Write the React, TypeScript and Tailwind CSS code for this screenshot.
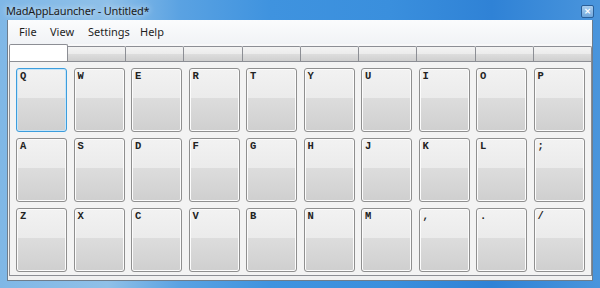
import React from "react";

const rows = [
  ["Q", "W", "E", "R", "T", "Y", "U", "I", "O", "P"],
  ["A", "S", "D", "F", "G", "H", "J", "K", "L", ";"],
  ["Z", "X", "C", "V", "B", "N", "M", ",", ".", "/"],
];

export default function App() {
  return (
    <div className="w-[600px] h-[288px] overflow-hidden bg-[linear-gradient(90deg,#7fb7e6_0%,#8fc0e8_18%,#5aa2e2_30%,#3f93df_45%,#3a8fdd_65%,#2f82d6_82%,#4a95dc_100%)] flex flex-col">
      {/* title bar */}
      <div className="h-[20px] flex items-center justify-between pl-[6px] pr-[6px]">
        <span
          className="text-[11px] tracking-[-0.2px] leading-none text-[#1b1b1b] pt-[1px]"
          style={{ fontFamily: '"Noto Sans", sans-serif', textShadow: "0 0 6px rgba(255,255,255,0.9)" }}
        >
          MadAppLauncher - Untitled*
        </span>
        <div className="w-[13px] h-[13px] mt-[3px] rounded-[2px] border border-[#2a5f98] bg-[linear-gradient(#a9cdee,#6fa7dc)] flex items-center justify-center">
          <span className="text-[9px] leading-none text-white font-bold" style={{ fontFamily: '"DejaVu Sans", sans-serif' }}>
            ×
          </span>
        </div>
      </div>
      {/* client */}
      <div className="mx-[7px] mb-[7px] flex-1 flex flex-col bg-[#f0f0f0] border border-[#6e7d8c] border-t-0">
        {/* menu bar */}
        <div
          className="h-[24px] flex items-center bg-[linear-gradient(#fbfcfd,#f1f3f6)] text-[11px] text-[#1e1e1e] pl-[11px] pt-[1px]"
          style={{ fontFamily: '"Noto Sans", sans-serif' }}
        >
          <span className="w-[31px]">File</span>
          <span className="w-[38px]">View</span>
          <span className="w-[52px]">Settings</span>
          <span>Help</span>
        </div>
        {/* tabs */}
        <div className="h-[17px] flex items-end pl-[1px] bg-[#f8f8f9]">
          <div className="w-[59px] h-[17px] bg-white border border-[#8c8e94] border-b-0 rounded-t-[2px]" />
          {Array.from({ length: 9 }).map((_, i) => (
            <div
              key={i}
              className="w-[58.3px] h-[15px] bg-[linear-gradient(#f3f3f3_0%,#ebebeb_50%,#dddddd_51%,#cfcfcf_100%)] border border-[#8c8e94] border-l-0 border-b-0 rounded-tr-[2px]"
            />
          ))}
        </div>
        {/* tab page */}
        <div className="ml-[1px] w-[583px] h-[215px] bg-[#f3f3f3] border border-[#8c8e94] pl-[6px] pt-[6px]">
          <div className="grid grid-cols-[repeat(10,51px)] auto-rows-[64px] gap-x-[6.5px] gap-y-[6px]">
            {rows.flat().map((k, i) => (
              <div
                key={k}
                className={
                  "rounded-[3px] border bg-[linear-gradient(#f2f2f2_0%,#ebebeb_46%,#dddddd_46%,#cfcfcf_100%)] pl-[3px] pt-[2px] " +
                  (i === 0
                    ? "border-[#3c9ddd] shadow-[inset_0_0_0_1px_#c7e5f8]"
                    : "border-[#8f8f8f] shadow-[inset_0_0_0_1px_#fcfcfc]")
                }
              >
                <span
                  className="block text-[10.5px] font-bold leading-none text-[#222]"
                  style={{ fontFamily: '"Liberation Mono", monospace' }}
                >
                  {k}
                </span>
              </div>
            ))}
          </div>
        </div>
      </div>
    </div>
  );
}
